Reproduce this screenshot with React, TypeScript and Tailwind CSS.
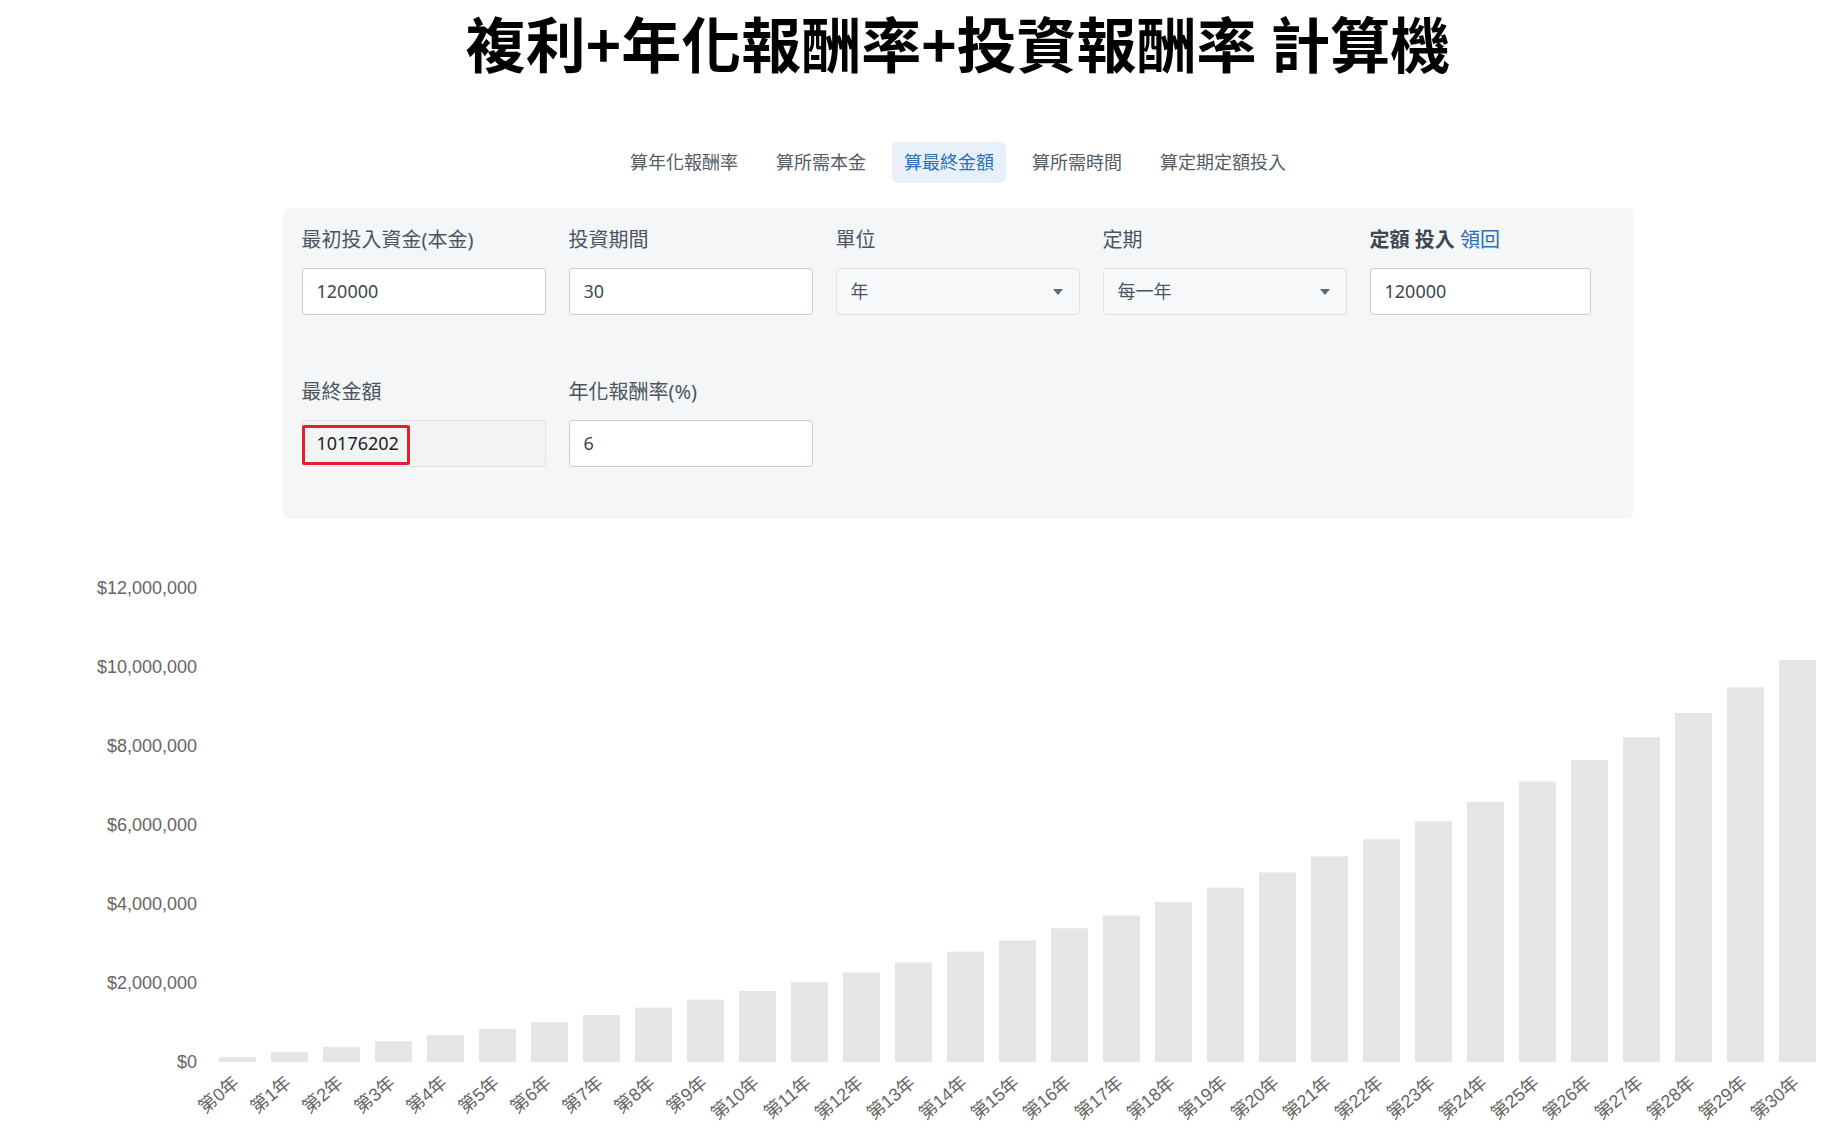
import React from 'react'

const TABS = ['算年化報酬率', '算所需本金', '算最終金額', '算所需時間', '算定期定額投入']

const PRINCIPAL = 120000
const RATE = 0.06
const YEARS = 30
const VALUES = Array.from({ length: YEARS + 1 }, (_, n) => {
  const g = Math.pow(1 + RATE, n)
  return PRINCIPAL * g + (PRINCIPAL * (g - 1)) / RATE
})

// chart geometry (svg coords)
const BASE = 502
const STEP = 79 // px per $2,000,000
const MAX = 12000000
const BAR_X0 = 219
const BAR_PITCH = 52
const BAR_W = 37

function Label({ children }: { children: React.ReactNode }) {
  return <div className="h-[28px] leading-[28px] text-[20px] text-[#4b5560] mb-[14px] whitespace-nowrap">{children}</div>
}

function TextBox({ value, w = 'w-[244px]' }: { value: string; w?: string }) {
  return (
    <div className={`${w} h-[47px] rounded-[4px] border border-[#c6cdd4] bg-white px-[14px] flex items-center text-[18px] text-[#3f474f]`}>
      {value}
    </div>
  )
}

function SelectBox({ value }: { value: string }) {
  return (
    <div className="w-[244px] h-[47px] rounded-[4px] border border-[#dde2e7] bg-[#f7f8fa] pl-[14px] pr-[16px] flex items-center justify-between text-[18px] text-[#4b5560]">
      <span>{value}</span>
      <svg width="10" height="6" viewBox="0 0 10 6"><path d="M0 0h10L5 6z" fill="#5f6873" /></svg>
    </div>
  )
}

function Chart() {
  const ticks = [0, 1, 2, 3, 4, 5, 6]
  return (
    <svg width="1844" height="574" viewBox="0 0 1844 574" className="block">
      {ticks.map(i => (
        <text key={i} x={197} y={BASE - i * STEP} textAnchor="end" dominantBaseline="central"
          fontFamily="'Liberation Sans', Arial, sans-serif" fontSize="18" fill="#666">
          ${(i * 2000000).toLocaleString('en-US')}
        </text>
      ))}
      {VALUES.map((v, i) => {
        const h = (v / MAX) * STEP * 6
        return <rect key={i} x={BAR_X0 + i * BAR_PITCH} y={BASE - h} width={BAR_W} height={h} fill="#e5e5e5" />
      })}
      {VALUES.map((_, i) => {
        const cx = BAR_X0 + i * BAR_PITCH + BAR_W / 2
        return (
          <text key={i} transform={`translate(${cx - 1} ${BASE + 18}) rotate(-40)`} textAnchor="end" dominantBaseline="central"
            fontFamily="'Liberation Sans', 'Noto Sans CJK TC', sans-serif" fontSize="18" fill="#666">
            第{i}年
          </text>
        )
      })}
    </svg>
  )
}

export default function App() {
  return (
    <div className="w-[1844px] min-h-[1134px] bg-white font-['Noto_Sans','Noto_Sans_CJK_TC',sans-serif]">
      <div className="flex flex-col items-center pl-[72px]">
        <h1 className="pt-[6px] leading-[72px] text-[60px] font-bold text-black font-['Noto_Sans_CJK_TC',sans-serif] whitespace-nowrap">
          複利+年化報酬率+投資報酬率 計算機
        </h1>

        <div className="mt-[64px] flex gap-[14px]">
          {TABS.map((t, i) => (
            <div key={t}
              className={`h-[41px] px-[12px] rounded-[5px] flex items-center text-[18px] ${i === 2 ? 'bg-[#e8f1fb] text-[#2d6fb7]' : 'text-[#555d66]'}`}>
              {t}
            </div>
          ))}
        </div>

        <div className="mt-[25px] w-[1351px] rounded-[8px] bg-[#f4f6f8] pt-[18px] pb-[52px] pl-[19px]">
          <div className="flex gap-[23px]">
            <div><Label>最初投入資金(本金)</Label><TextBox value="120000" /></div>
            <div><Label>投資期間</Label><TextBox value="30" /></div>
            <div><Label>單位</Label><SelectBox value="年" /></div>
            <div><Label>定期</Label><SelectBox value="每一年" /></div>
            <div>
              <Label><span className="font-bold text-[#3f4850]">定額 投入</span> <span className="text-[#2d6fb7]">領回</span></Label>
              <TextBox value="120000" w="w-[221px]" />
            </div>
          </div>
          <div className="flex gap-[23px] mt-[63px]">
            <div>
              <Label>最終金額</Label>
              <div className="relative w-[244px] h-[47px] rounded-[4px] border border-[#dde2e7] bg-[#f1f3f5] px-[14px] flex items-center text-[18px] text-[#222]">
                10176202
                <div className="absolute -left-px top-[4px] w-[108px] h-[40px] border-[3px] border-[#e3202a] rounded-[2px]" />
              </div>
            </div>
            <div><Label>年化報酬率(%)</Label><TextBox value="6" /></div>
          </div>
        </div>
      </div>

      <div className="mt-[41px]">
        <Chart />
      </div>
    </div>
  )
}
